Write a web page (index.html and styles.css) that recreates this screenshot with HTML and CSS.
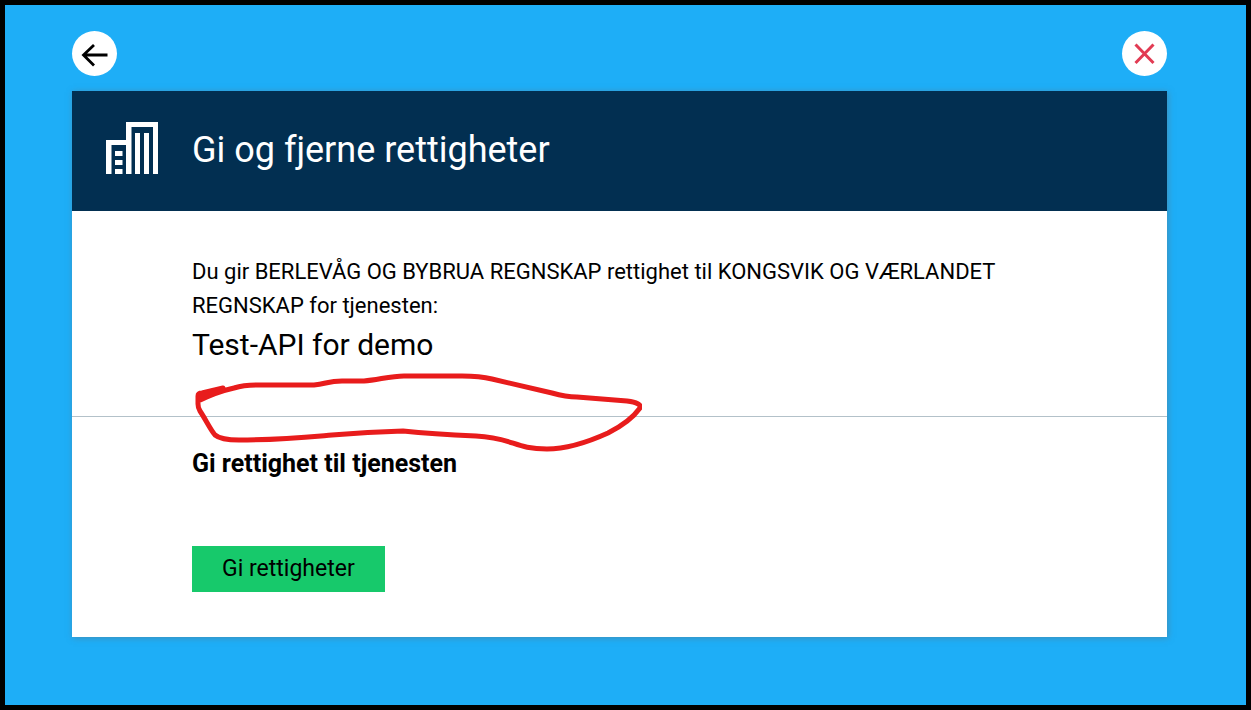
FILE: index.html
```html
<!DOCTYPE html>
<html lang="no">
<head>
<meta charset="utf-8">
<meta name="viewport" content="width=device-width, initial-scale=1">
<title>Gi og fjerne rettigheter</title>
<link rel="stylesheet" href="styles.css">
</head>
<body>
<div class="page">
  <nav class="toolbar">
    <button class="round-button" type="button" aria-label="Tilbake">
      <svg viewBox="0 0 45 45" aria-hidden="true"><path class="arrow" d="M35.5 24H11.500M22 14L11.500 24L22 34.500"/></svg>
    </button>
    <button class="round-button" type="button" aria-label="Lukk">
      <svg viewBox="0 0 45 45" aria-hidden="true"><path class="cross" d="M13.500 13.500L31.500 32M31.500 13.500L13.500 32"/></svg>
    </button>
  </nav>
  <main class="panel">
    <header class="panel-header">
      <svg class="building" viewBox="0 0 52 52" aria-hidden="true">
        <path d="M0 52V18H20V0H52V52H47V5H25.500V52H20V23H5.500V52ZM29 52V11H34V52ZM38 52V11H43V52ZM9 29H16.500V34H9ZM9 38H16.500V43H9ZM9 47H16.500V52H9Z"/>
      </svg>
      <h1 class="title">Gi og fjerne rettigheter</h1>
    </header>
    <section class="summary">
      <p class="intro">Du gir BERLEVÅG OG BYBRUA REGNSKAP rettighet til KONGSVIK OG VÆRLANDET REGNSKAP for tjenesten:</p>
      <p class="service">Test-API for demo</p>
      <svg class="scribble" viewBox="0 0 450 80" aria-hidden="true">
        <path d="M31 16L10 21Q6 21 6 24V29Q24 20 42 16Q52 13 66 13H122C134 12 136 9 150 9H172C186 8 198 4 212 4H270Q288 4 300 7L360 21Q374 25 385 25L435 29Q450 31 448 36Q438 50 416 61C394 71 372 77 355 77C322 77 322 66 284 64Q240 62 211 59Q176 60 140 63C105 66 85 68 47 68Q29 68 23 63C18 57 14 48 8 39Q6 36 6 32V25M9 26L31 18"/>
      </svg>
    </section>
    <section class="grant">
      <h2 class="subtitle">Gi rettighet til tjenesten</h2>
      <button class="submit" type="button">Gi rettigheter</button>
    </section>
  </main>
</div>
</body>
</html>
```

FILE: styles.css
```css
* {
  box-sizing: border-box;
}

body {
  margin: 0;
  font-family: Roboto, "Liberation Sans", sans-serif;
  font-size: 22px;
  color: #000;
}

.page {
  min-height: 100vh;
  padding: 26px 79px 68px 67px;
  border: 5px solid #000;
  background: #1eaef7;
}

.toolbar {
  display: flex;
  justify-content: space-between;
  margin-bottom: 15px;
}

.round-button {
  width: 45px;
  height: 45px;
  padding: 0;
  border: 0;
  border-radius: 50%;
  background: #fff;
  cursor: pointer;
}

.round-button svg {
  display: block;
  width: 100%;
  height: 100%;
  fill: none;
}

.arrow {
  stroke: #000;
  stroke-width: 2.8;
}

.cross {
  stroke: #e23b53;
  stroke-width: 3;
}

.panel {
  background: #fff;
  box-shadow: 1px 1px 6px rgba(100, 110, 120, 0.5);
}

.panel-header {
  display: flex;
  align-items: center;
  gap: 34px;
  min-height: 120px;
  padding: 0 34px;
  background: #022f51;
  color: #fff;
}

.building {
  flex: none;
  width: 52px;
  height: 52px;
  margin-bottom: 6px;
  fill: #fff;
}

.title {
  margin: 0 0 2px;
  font-size: 36px;
  line-height: 44px;
  font-weight: 400;
}

.summary {
  position: relative;
  padding: 44px 120px 53px;
  border-bottom: 1px solid #b3c1c9;
}

.intro,
.service {
  margin: 0;
  line-height: 34px;
}

.service {
  padding-top: 4px;
  font-size: 30px;
  line-height: 36px;
}

.scribble {
  position: absolute;
  left: 120px;
  bottom: -36px;
  width: 450px;
  height: 80px;
  fill: none;
  stroke: #e81c1c;
  stroke-width: 5;
  stroke-linecap: round;
  stroke-linejoin: round;
  pointer-events: none;
}

.grant {
  display: flex;
  flex-direction: column;
  align-items: flex-start;
  gap: 65px;
  padding: 30px 120px 45px;
}

.subtitle {
  margin: 0;
  font-size: 25px;
  line-height: 34px;
  font-weight: 700;
}

.submit {
  padding: 6px 30px;
  border: 0;
  background: #17c96b;
  color: #000;
  font-family: inherit;
  font-size: 23px;
  line-height: 34px;
  cursor: pointer;
}
```
